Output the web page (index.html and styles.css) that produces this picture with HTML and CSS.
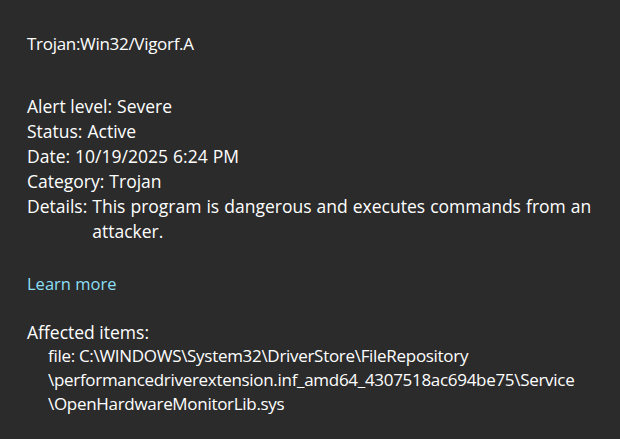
FILE: index.html
```html
<!DOCTYPE html>
<html>
<head>
<meta charset="utf-8">
<link rel="stylesheet" href="styles.css">
</head>
<body>
<main class="panel">
  <h1 class="title">Trojan:Win32/Vigorf.A</h1>
  <section class="info">
    <div class="row"><span class="label">Alert level:</span><span class="value">Severe</span></div>
    <div class="row"><span class="label">Status:</span><span class="value">Active</span></div>
    <div class="row"><span class="label">Date:</span><span class="value">10/19/2025 6:24 PM</span></div>
    <div class="row"><span class="label">Category:</span><span class="value">Trojan</span></div>
    <div class="row"><span class="label">Details:</span><span class="value">This program is dangerous and executes commands from an attacker.</span></div>
  </section>
  <a class="link" href="#">Learn more</a>
  <section class="affected">
    <div class="affected-title">Affected items:</div>
    <div class="item">file: C:\WINDOWS\System32\DriverStore\FileRepository<br>\performancedriverextension.inf_amd64_4307518ac694be75\Service<br>\OpenHardwareMonitorLib.sys</div>
  </section>
</main>
</body>
</html>
```
FILE: styles.css
```css
html, body {
  margin: 0;
  padding: 0;
  background: #2b2b2b;
}
body {
  width: 620px;
  height: 439px;
  overflow: hidden;
  font-family: "Open Sans", "Noto Sans", sans-serif;
  font-size: 17.5px;
  color: #ffffff;
}
.panel {
  display: flex;
  flex-direction: column;
  align-items: flex-start;
  padding: 31px 10px 0 27px;
}
.title {
  margin: 0;
  font-size: 17px;
  letter-spacing: -0.3px;
  font-weight: 400;
  line-height: 25px;
}
.info {
  margin-top: 38px;
  display: flex;
  flex-direction: column;
}
.row {
  display: flex;
  line-height: 25px;
}
.label {
  flex: none;
  margin-right: 5px;
}
.value {
  width: 505px;
  word-spacing: 0.5px;
}
.link {
  margin-top: 27px;
  color: #8ddff5;
  text-decoration: none;
  font-size: 16.5px;
  line-height: 25px;
}
.affected {
  margin-top: 24px;
  line-height: 24px;
}
.item {
  padding-left: 21px;
  font-size: 17px;
  letter-spacing: -0.3px;
  white-space: nowrap;
}
```
